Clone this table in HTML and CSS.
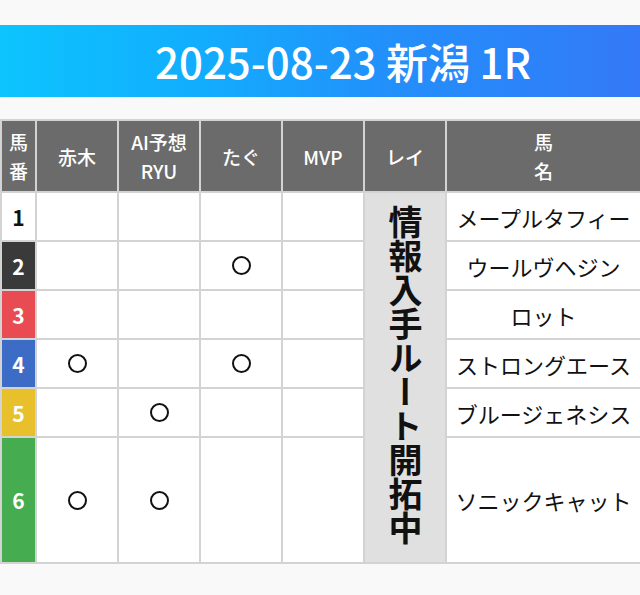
FILE: index.html
```html
<!DOCTYPE html>
<html lang="ja">
<head>
<meta charset="utf-8">
<link rel="stylesheet" href="styles.css">
</head>
<body>
<div class="page">
  <div class="title-bar"><h1 class="title">2025-08-23 新潟 1R</h1></div>
  <table class="race">
    <colgroup>
      <col class="c-num"><col class="c-m"><col class="c-m"><col class="c-m"><col class="c-m"><col class="c-m"><col class="c-name">
    </colgroup>
    <thead>
      <tr class="head-row">
        <th>馬<br>番</th>
        <th>赤木</th>
        <th>AI予想<br>RYU</th>
        <th>たぐ</th>
        <th>MVP</th>
        <th>レイ</th>
        <th>馬<br>名</th>
      </tr>
    </thead>
    <tbody>
      <tr class="row">
        <td class="num n1">1</td><td></td><td></td><td></td><td></td>
        <td class="rei" rowspan="6"><span class="rei-text">情報入手ルート開拓中</span></td>
        <td class="name">メープルタフィー</td>
      </tr>
      <tr class="row">
        <td class="num n2">2</td><td></td><td></td><td class="mark"><span class="circle" aria-label="○"></span></td><td></td>
        <td class="name">ウールヴヘジン</td>
      </tr>
      <tr class="row">
        <td class="num n3">3</td><td></td><td></td><td></td><td></td>
        <td class="name">ロット</td>
      </tr>
      <tr class="row">
        <td class="num n4">4</td><td class="mark"><span class="circle" aria-label="○"></span></td><td></td><td class="mark"><span class="circle" aria-label="○"></span></td><td></td>
        <td class="name">ストロングエース</td>
      </tr>
      <tr class="row">
        <td class="num n5">5</td><td></td><td class="mark"><span class="circle" aria-label="○"></span></td><td></td><td></td>
        <td class="name">ブルージェネシス</td>
      </tr>
      <tr class="row tall">
        <td class="num n6">6</td><td class="mark"><span class="circle" aria-label="○"></span></td><td class="mark"><span class="circle" aria-label="○"></span></td><td></td><td></td>
        <td class="name">ソニックキャット</td>
      </tr>
    </tbody>
  </table>
</div>
</body>
</html>
```

FILE: styles.css
```css
* { box-sizing: border-box; }
html, body { margin: 0; padding: 0; }
body {
  background: #f9f9f9;
  font-family: "Noto Sans CJK JP", "Noto Sans", sans-serif;
  width: 640px;
  height: 595px;
  overflow: hidden;
}
.page { padding-top: 25px; }
.title-bar {
  height: 72px;
  background: linear-gradient(90deg, #0cc4fe 0%, #12aefd 30%, #2290fb 60%, #3479f7 100%);
  display: flex;
  align-items: center;
  justify-content: center;
  padding-left: 46px;
}
.title {
  margin: 0;
  color: #fff;
  font-size: 42px;
  font-weight: 500;
  line-height: 1;
  letter-spacing: 0;
}
.race {
  margin-top: 22px;
  width: 640px;
  table-layout: fixed;
  border-collapse: collapse;
}
.c-num { width: 35px; }
.c-m { width: 82px; }
.c-name { width: 195px; }
.race th, .race td {
  border: 2px solid #d3d3d3;
  padding: 0;
  text-align: center;
  vertical-align: middle;
}
.race th {
  background: #6b6b6b;
  color: #fff;
  font-size: 19px;
  font-weight: 500;
  line-height: 29px;
  height: 72px;
}
.race td { background: #fff; }
.row td { height: 49px; }
.row.tall td { height: 126px; }
.num {
  font-size: 21px;
  font-weight: 700;
  color: #fff;
}
.n1 { color: #111; background: #fff; }
.race .n2 { background: #3a3a3a; }
.race .n3 { background: #e84c52; }
.race .n4 { background: #3d6cc6; }
.race .n5 { background: #e8c02c; }
.race .n6 { background: #45ad4f; }
.mark { line-height: 0; }
.circle {
  display: inline-block;
  width: 19px;
  height: 19px;
  border: 2.5px solid #111;
  border-radius: 50%;
}
.race .rei { background: #e0e0e0; }
.rei-text {
  display: inline-block;
  writing-mode: vertical-rl;
  text-orientation: upright;
  font-size: 34px;
  font-weight: 700;
  line-height: 1;
  color: #111;
}
.name {
  font-size: 22px;
  color: #111;
  white-space: nowrap;
}
```
